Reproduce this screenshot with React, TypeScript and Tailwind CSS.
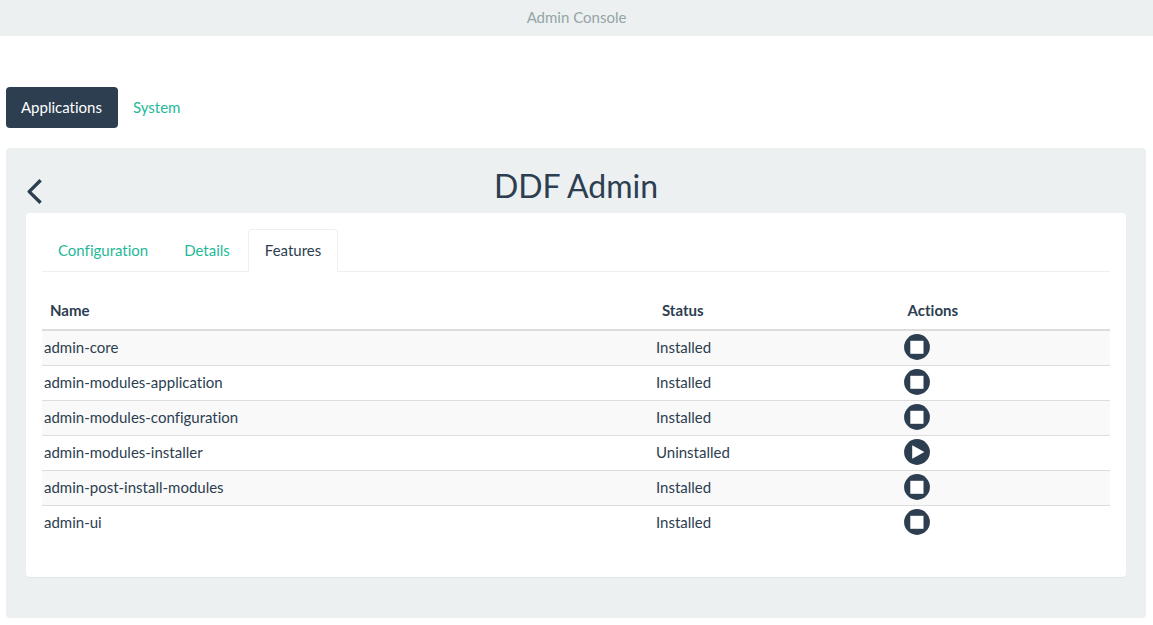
type Feature = { name: string; status: "Installed" | "Uninstalled" };

const features: Feature[] = [
  { name: "admin-core", status: "Installed" },
  { name: "admin-modules-application", status: "Installed" },
  { name: "admin-modules-configuration", status: "Installed" },
  { name: "admin-modules-installer", status: "Uninstalled" },
  { name: "admin-post-install-modules", status: "Installed" },
  { name: "admin-ui", status: "Installed" },
];

function ActionIcon({ installed }: { installed: boolean }) {
  return (
    <svg viewBox="0 0 26 26" className="size-[26px]" aria-hidden="true">
      <circle cx="13" cy="13" r="12.9" fill="#2c3e50" />
      {installed ? (
        <rect x="6.3" y="6.8" width="13.2" height="13" fill="#fff" />
      ) : (
        <path d="M8.2 6.3v13.4L20.4 13z" fill="#fff" />
      )}
    </svg>
  );
}

export default function App() {
  return (
    <div className="min-h-screen bg-white font-['Lato',sans-serif] text-[15px] leading-[21px] text-[#2c3e50] [font-variant-ligatures:none]">
      <header className="flex h-9 items-center justify-center bg-[#ecf0f1] pb-px text-[#95a5a6]">
        Admin Console
      </header>
      <main className="pt-[51px] pr-[7px] pb-[7px] pl-[6px]">
        <nav className="flex">
          <a href="#applications" className="rounded bg-[#2c3e50] py-[10px] pr-4 pl-[15px] text-white">
            Applications
          </a>
          <a href="#system" className="px-[15px] py-[10px] text-[#1fb899]">
            System
          </a>
        </nav>
        <section className="mt-5 rounded bg-[#ecf0f1] px-5 pt-5 pb-[41px]">
          <div className="grid grid-cols-[40px_1fr_40px] items-center pb-[9px]">
            <button type="button" aria-label="Back" className="justify-self-start pt-[10px]">
              <svg viewBox="0 0 16 26" className="h-[26px] w-4" fill="none" stroke="#2c3e50" strokeWidth="3.4" strokeLinejoin="round" aria-hidden="true">
                <path d="M14.6 2.2 3.2 13.6l11.4 11.2" />
              </svg>
            </button>
            <h1 className="text-center text-[32px] leading-9">DDF Admin</h1>
          </div>
          <div className="rounded bg-white px-4 pt-4 pb-[37px] shadow-[0_1px_1px_rgba(0,0,0,0.05)]">
            <nav className="flex gap-[2px] border-b border-[#ecf0f1]">
              <a href="#configuration" className="pt-[11px] pr-[18px] pb-[10px] pl-4 text-[#1fb899]">Configuration</a>
              <a href="#details" className="px-4 pt-[11px] pb-[10px] text-[#1fb899]">Details</a>
              <a href="#features" className="-mb-px rounded-t border border-b-0 border-[#ecf0f1] bg-white px-4 py-[10px]">
                Features
              </a>
            </nav>
            <table className="mt-5 w-full table-fixed border-collapse text-left">
              <thead>
                <tr className="border-b-2 border-[#dddddd]">
                  <th className="w-[57.3%] p-2">Name</th>
                  <th className="w-[23%] p-2">Status</th>
                  <th className="p-2">Actions</th>
                </tr>
              </thead>
              <tbody>
                {features.map((f) => (
                  <tr key={f.name} className="h-[35px] border-b border-[#dddddd] odd:bg-[#f9f9f9] last:border-b-0">
                    <td className="px-[2px]">{f.name}</td>
                    <td className="px-[2px]">{f.status}</td>
                    <td className="px-1 pb-[2px]">
                      <button
                        type="button"
                        className="block"
                        aria-label={f.status === "Installed" ? `Stop ${f.name}` : `Start ${f.name}`}
                      >
                        <ActionIcon installed={f.status === "Installed"} />
                      </button>
                    </td>
                  </tr>
                ))}
              </tbody>
            </table>
          </div>
        </section>
      </main>
    </div>
  );
}
